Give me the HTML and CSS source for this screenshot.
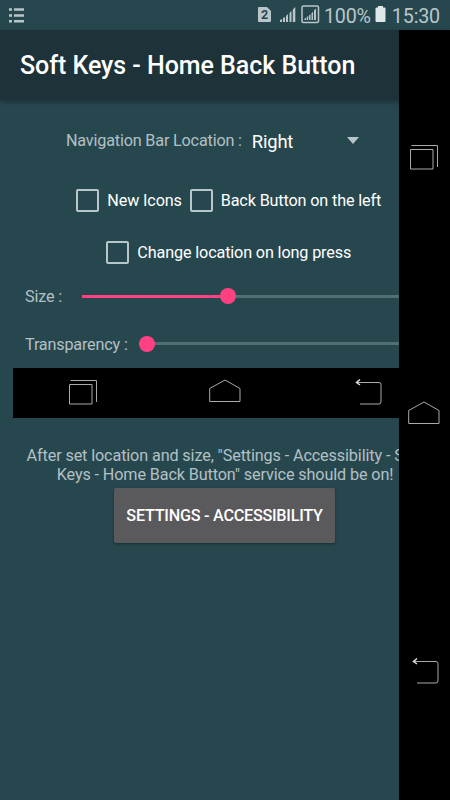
FILE: index.html
```html
<!DOCTYPE html>
<html lang="en">
<head>
    <meta charset="UTF-8">
    <meta name="viewport" content="width=device-width, initial-scale=1.0">
    <title>Soft Keys - Home Back Button</title>
    <link rel="stylesheet" href="styles.css">
</head>
<body>
    <!-- icons shared by the preview and the soft key bar -->
    <svg class="sprite">
        <symbol id="recent" viewBox="0 0 32 30">
            <path d="M2.500 6.500h22.500v19.500H2.500zM3.500 2.500h26v21.500"/>
        </symbol>
        <symbol id="home" viewBox="0 0 32 30">
            <path d="M.7 10.500L16 2l15 8.500v13H.7z"/>
        </symbol>
        <symbol id="back" viewBox="0 0 32 30">
            <path d="M5 4.500h23q2 0 2 2v17.500q0 2-2 2H9"/>
            <path class="arrow" d="M9 1.500L5.500 4.500l3.500 2.500"/>
        </symbol>
    </svg>

    <div class="status-bar">
        <svg class="list-icon" width="16" height="16" viewBox="0 0 16 16">
            <path d="M0 1.500h3M5 1.500h10M0 7.500h3M5 7.500h10M0 13.300h3M5 13.300h10"/>
        </svg>
        <div class="status-right">
            <svg class="sim" width="13" height="16" viewBox="0 0 13 16">
                <path d="M1 0h8l4 4v10q0 1-1 1H1q-1 0-1-1V1q0-1 1-1z"/>
                <text x="6.500" y="12.200">2</text>
            </svg>
            <svg class="signal" width="16" height="16" viewBox="0 0 16 16">
                <path d="M0 15v-2l2-1v3zM3 15v-4l2-1v5zM6 15V9l2-2v8zM9.500 15V6l2-2v11zM12.800 15V2.500L15.300 0v15z"/>
            </svg>
            <svg class="signal-box" width="19" height="19" viewBox="0 0 19 19">
                <rect x="1" y="1" width="16.500" height="16.500" rx="1.500"/>
                <path d="M3.500 15v-1.500l1.500-.7V15zM5.700 15v-3l1.500-1v4zM8 15v-4.500l1.500-1.300V15zM10.500 15V8.300l1.500-1.500V15zM13 15V5.500l2-2V15z"/>
            </svg>
            <span class="percent">100%</span>
            <svg class="battery" width="11" height="16" viewBox="0 0 11 16">
                <path d="M3 0h5v1.500h1.500q1 0 1 1V15q0 1-1 1h-8q-1 0-1-1V2.500q0-1 1-1H3z"/>
            </svg>
            <span class="clock">15:30</span>
        </div>
    </div>

    <h1 class="toolbar">Soft Keys - Home Back Button</h1>

    <div class="content">
        <div class="location">
            <span class="label">Navigation Bar Location :</span>
            <div class="spinner">Right</div>
        </div>
        <div class="checks">
            <label class="check"><span class="box"></span>New Icons</label>
            <label class="check"><span class="box"></span>Back Button on the left</label>
        </div>
        <div class="checks last">
            <label class="check"><span class="box"></span>Change location on long press</label>
        </div>
        <div class="slider size">
            <span class="label">Size :</span>
            <div class="track"><div class="fill"></div><div class="thumb"></div></div>
        </div>
        <div class="slider transparency">
            <span class="label">Transparency :</span>
            <div class="track"><div class="thumb"></div></div>
        </div>
        <div class="preview">
            <svg class="key"><use href="#recent"/></svg>
            <svg class="key"><use href="#home"/></svg>
            <svg class="key"><use href="#back"/></svg>
        </div>
        <p class="hint">After set location and size, "Settings - Accessibility - Soft<br>Keys - Home Back Button" service should be on!</p>
        <button type="button" class="settings">SETTINGS - ACCESSIBILITY</button>
    </div>

    <!-- sits over the app, like the real service does -->
    <div class="soft-keys">
        <svg class="key"><use href="#recent"/></svg>
        <svg class="key"><use href="#home"/></svg>
        <svg class="key"><use href="#back"/></svg>
    </div>
</body>
</html>
```
FILE: styles.css
```css
* {
    box-sizing: border-box;
}
body {
    position: relative;
    width: 450px;
    height: 800px;
    margin: 0;
    overflow: hidden;
    font-family: Roboto, sans-serif;
    font-size: 16.2px;
    letter-spacing: -0.18px;
    background-color: #27474f;
    color: #fff;
}
.sprite {
    display: none;
}
.status-bar {
    display: flex;
    justify-content: space-between;
    height: 30px;
    padding: 0 10px 0 9px;
    color: #b9c6c9;
}
.list-icon {
    margin-top: 8px;
    fill: none;
    stroke: #b9c6c9;
    stroke-width: 2.4;
}
.status-right {
    display: flex;
    align-items: flex-start;
    fill: #b9c6c9;
    font-size: 19.7px;
    line-height: 33px;
}
.sim {
    margin: 7px 9px 0 0;
}
.sim text {
    fill: #27474f;
    font-size: 12.5px;
    font-weight: 700;
    text-anchor: middle;
}
.signal {
    margin: 7px 5px 0 0;
}
.signal-box {
    margin: 5px 4px 0 0;
}
.signal-box rect {
    fill: none;
    stroke: #b9c6c9;
    stroke-width: 1.5;
}
.battery {
    margin: 6px 6px 0 4px;
    fill: #dfe8e8;
}
.toolbar {
    height: 70px;
    margin: 0;
    padding-left: 20px;
    font-size: 25px;
    font-weight: 500;
    line-height: 72px;
    letter-spacing: -0.04px;
    background-color: #1e3239;
    box-shadow: 0 2px 5px rgba(0, 0, 0, 0.3);
}
.content {
    padding: 16px 12px 0 12.5px;
}
.label {
    color: #b3c0c3;
}
.location {
    display: flex;
    align-items: center;
    height: 50px;
    padding-left: 53.5px;
}
.location .label {
    margin-top: -2px;
}
.spinner {
    display: flex;
    align-items: center;
    justify-content: space-between;
    width: 107px;
    margin-left: 10px;
    font-size: 18.4px;
}
.spinner::after {
    content: "";
    margin-top: -2px;
    border: 6px solid transparent;
    border-top: 7px solid #b9c6c9;
    border-bottom: 0;
}
.checks {
    display: flex;
    justify-content: center;
    gap: 8px;
    height: 52px;
    margin-top: 8px;
    padding-left: 7px;
    letter-spacing: -0.14px;
}
.checks.last {
    margin-top: 0;
}
.check {
    display: flex;
    align-items: center;
}
.box {
    width: 23px;
    height: 23px;
    margin-right: 8px;
    border: 2px solid #b9c6c9;
    border-radius: 2px;
}
.slider {
    display: flex;
    align-items: center;
    margin-right: -12px;
    padding-left: 12.5px;
}
.size {
    height: 36px;
    padding-top: 1px;
}
.transparency {
    height: 54px;
    padding-top: 6px;
}
.track {
    display: flex;
    align-items: center;
    flex: 1;
    height: 3px;
    margin: -1px 0 0 20px;
    background-color: #536f76;
}
.fill {
    width: 138px;
    height: 3px;
    background-color: #ff4081;
}
.thumb {
    flex: none;
    width: 16px;
    height: 16px;
    border-radius: 50%;
    background-color: #ff4081;
}
.transparency .track {
    margin: -1px 0 0 11px;
}
.preview {
    display: flex;
    justify-content: space-between;
    height: 50px;
    padding: 10px 55px 0 54.5px;
    background-color: #000;
}
.key {
    width: 32px;
    height: 30px;
    fill: none;
    stroke: #aaa;
    stroke-width: 1;
}
.arrow {
    stroke: #ddd;
    stroke-width: 1.5;
}
.hint {
    margin: 28px -12px 0 -12.5px;
    line-height: 19px;
    text-align: center;
    letter-spacing: -0.12px;
    white-space: nowrap;
    color: #b3c0c3;
}
.settings {
    display: block;
    width: 221px;
    height: 55px;
    margin: 4px auto 0 101.5px;
    padding: 0;
    border: none;
    border-radius: 2px;
    font-family: inherit;
    font-size: 16.2px;
    font-weight: 500;
    letter-spacing: -0.25px;
    color: #fff;
    background-color: #5a5a5c;
    box-shadow: 0 1px 3px rgba(0, 0, 0, 0.4);
}
.soft-keys {
    position: absolute;
    top: 30px;
    right: 0;
    bottom: 0;
    display: flex;
    flex-direction: column;
    align-items: center;
    justify-content: space-between;
    width: 51px;
    padding: 113px 1px 113px 0;
    background-color: #000;
}
```
